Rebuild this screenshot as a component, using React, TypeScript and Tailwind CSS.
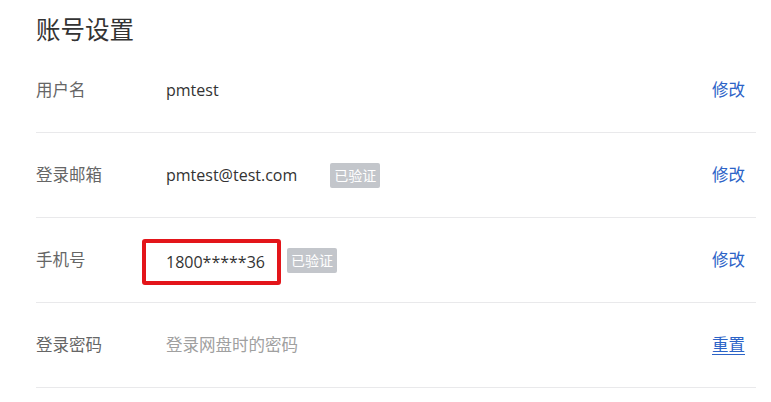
const font = "font-['Open_Sans','Noto_Sans_CJK_SC',sans-serif]";

function Badge() {
  return (
    <span className="inline-flex h-[25px] items-center rounded-[2px] bg-[#c3c6cb] px-[4px] text-[14px] text-white">
      已验证
    </span>
  );
}

function Row({
  label,
  children,
  action,
  active = false,
}: {
  label: string;
  children: React.ReactNode;
  action: string;
  active?: boolean;
}) {
  return (
    <div className="flex h-[85px] items-center border-b border-[#e9e9eb]">
      <div className="w-[130px] shrink-0 text-[16.5px] text-[#666]">{label}</div>
      <div className="flex flex-1 items-center">{children}</div>
      <span className={`pr-[11px] text-[16.5px] text-[#2c63c7] ${active ? "underline underline-offset-[3px]" : ""}`}>
        {action}
      </span>
    </div>
  );
}

export default function App() {
  return (
    <div className={`min-h-[402px] w-[771px] bg-white pl-[36px] pr-[15px] ${font}`}>
      <h1 className="pt-[17px] pb-[6px] text-[24.5px] leading-[25px] text-[#333]">账号设置</h1>
      <Row label="用户名" action="修改">
        <span className="text-[16px] text-[#333]">pmtest</span>
      </Row>
      <Row label="登录邮箱" action="修改">
        <span className="mr-[33px] text-[16px] text-[#333]">pmtest@test.com</span>
        <Badge />
      </Row>
      <Row label="手机号" action="修改">
        <span className="-ml-[24px] mr-[6px] mt-[3px] flex h-[46px] items-center rounded-[3px] border-4 border-[#e3151a] pl-[20px] pr-[12px] text-[16px] text-[#333]">
          1800*****36
        </span>
        <Badge />
      </Row>
      <Row label="登录密码" action="重置" active>
        <span className="text-[16.5px] text-[#a0a0a0]">登录网盘时的密码</span>
      </Row>
    </div>
  );
}
